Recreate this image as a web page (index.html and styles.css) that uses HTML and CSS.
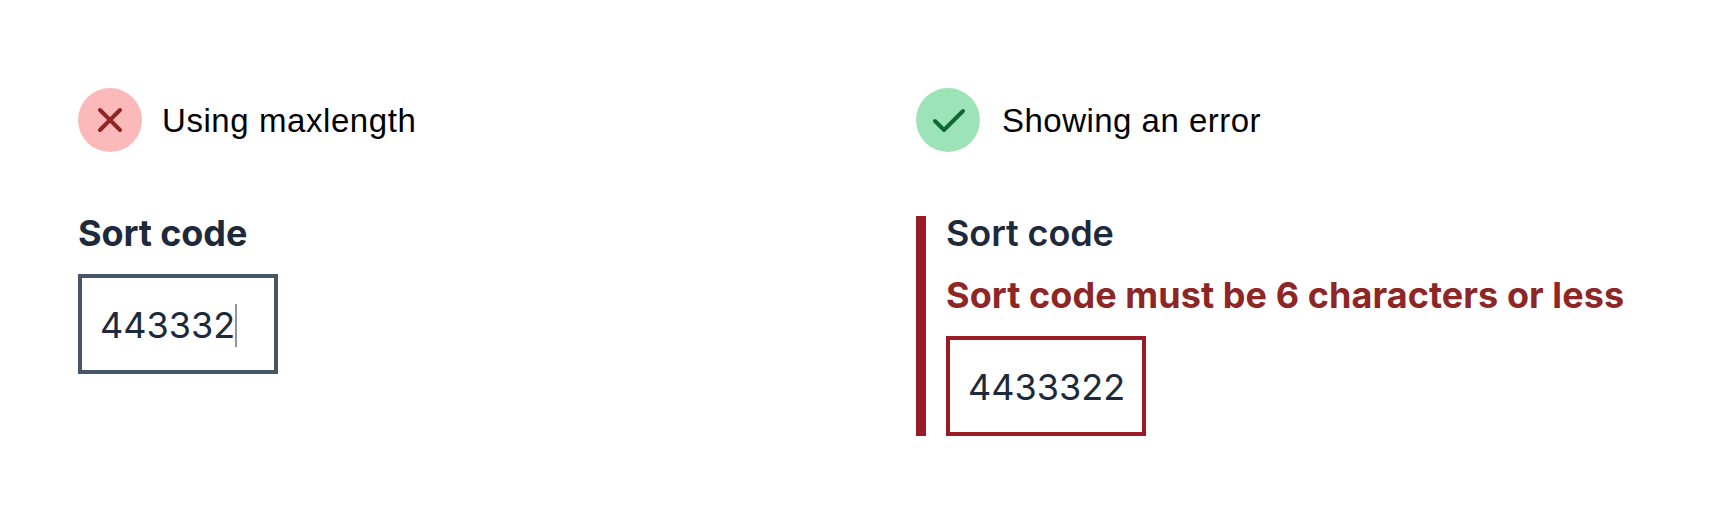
FILE: index.html
```html
<!DOCTYPE html>
<html lang="en">
<head>
<meta charset="utf-8">
<title>Sort code</title>
<link rel="stylesheet" href="styles.css">
</head>
<body>
<main class="comparison">
  <section class="example">
    <h2 class="heading">
      <svg class="icon" viewBox="0 0 64 64"><circle class="bad-bg" cx="32" cy="32" r="32"/><path class="bad-mark" d="M22 22L42 42M42 22L22 42"/></svg>
      <span class="title">Using maxlength</span>
    </h2>
    <div class="field">
      <div class="label strong">Sort code</div>
      <div class="input"><span class="value">443332</span><span class="caret"></span></div>
    </div>
  </section>
  <section class="example">
    <h2 class="heading">
      <svg class="icon" viewBox="0 0 64 64"><circle class="good-bg" cx="32" cy="32" r="32"/><path class="good-mark" d="M19 33L28 42L47 23"/></svg>
      <span class="title title-good">Showing an error</span>
    </h2>
    <div class="field invalid">
      <div class="label">Sort code</div>
      <div class="error">Sort code must be 6 characters or less</div>
      <div class="input"><span class="value">4433322</span></div>
    </div>
  </section>
</main>
</body>
</html>
```
FILE: styles.css
```css
body { margin: 0; background: #fff; color: #1e293b; font-family: Inter, sans-serif; }
.comparison { display: grid; grid-template-columns: 838px 1fr; padding: 88px 0 0 78px; }
.heading { display: flex; align-items: center; gap: 20px; height: 64px; margin: 0 0 64px; font: 400 33px/40px "Liberation Sans", Arial, sans-serif; color: #000; }
.title { letter-spacing: 0.57px; padding-top: 2px; }
.title-good { margin-left: 2px; letter-spacing: 0.48px; }
.icon { width: 64px; height: 64px; }
.icon path { fill: none; stroke-width: 4; stroke-linecap: round; stroke-linejoin: round; }
.bad-bg { fill: #fcb9b9; }
.bad-mark { stroke: #8f2626; }
.good-bg { fill: #9de3b8; }
.good-mark { stroke: #116932; }
.field { display: flex; flex-direction: column; }
.label, .error { font-size: 36px; line-height: 34px; height: 36px; white-space: nowrap; }
.label { font-weight: 600; margin-bottom: 22px; letter-spacing: -0.1px; }
.strong { font-weight: 700; }
.error { font-weight: 700; color: #8f2626; margin: 4px 0 22px; letter-spacing: 0.07px; }
.input { display: flex; align-items: center; box-sizing: border-box; width: 200px; height: 100px; padding: 2px 0 0 18px; border: 4px solid #475569; font-size: 36px; }
.caret { width: 2px; height: 43px; margin-top: 1px; background: #8e94a0; }
.invalid { border-left: 10px solid #991b26; padding-left: 20px; }
.invalid .input { border-color: #991b26; }
```
